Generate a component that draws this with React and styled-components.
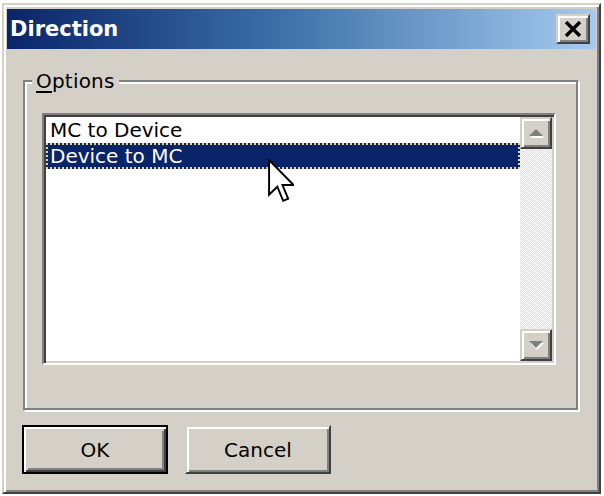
import React from 'react'
import styled, { createGlobalStyle } from 'styled-components'

const GlobalStyle = createGlobalStyle`
  html, body {
    margin: 0;
    padding: 0;
    background: #ffffff;
  }
  * {
    box-sizing: border-box;
  }
`

const raised = `
  border: 2px solid;
  border-color: #d4d0c8 #404040 #404040 #d4d0c8;
  box-shadow: inset 2px 2px #ffffff, inset -2px -2px #808080;
`

const Dialog = styled.div`
  width: 599px;
  height: 491px;
  margin: 3px 0 0 2px;
  padding: 3px;
  background: #d4d0c8;
  font-family: "DejaVu Sans", Tahoma, sans-serif;
  color: #000;
  display: flex;
  flex-direction: column;
  ${raised}
`

const TitleBar = styled.div`
  height: 40px;
  margin-top: 1px;
  display: flex;
  align-items: center;
  justify-content: space-between;
  padding: 0 6px 0 3px;
  background: linear-gradient(to right, #0a246a 0%, #3a6ea5 45%, #a6caf0 100%);
`

const Title = styled.span`
  color: #ffffff;
  font-weight: bold;
  font-size: 21px;
`

const CloseButton = styled.button`
  width: 34px;
  height: 30px;
  padding: 0;
  background: #d4d0c8;
  display: flex;
  align-items: center;
  justify-content: center;
  ${raised}
`

const Body = styled.div`
  padding: 20px 0 0 16px;
  display: flex;
  flex-direction: column;
`

const Group = styled.fieldset`
  width: 555px;
  margin: 0;
  padding: 20px 17px 43px 17px;
  border: 2px solid #808080;
  box-shadow: inset 2px 2px #ffffff, 2px 2px #ffffff;
`

const Legend = styled.legend`
  margin-left: -10px;
  padding: 0 4px;
  font-size: 20px;
  line-height: 24px;
  background: #d4d0c8;
  letter-spacing: 0.2px;
`

const Mnemonic = styled.span`
  text-decoration: underline;
  text-underline-offset: 3px;
`

const ListBox = styled.div`
  width: 514px;
  height: 252px;
  display: flex;
  background: #ffffff;
  border: 2px solid;
  border-color: #808080 #ffffff #ffffff #808080;
  box-shadow: inset 2px 2px #404040, inset -2px -2px #d4d0c8;
  padding: 2px;
`

const Items = styled.div`
  flex: 1;
  position: relative;
  display: flex;
  flex-direction: column;
`

const Item = styled.div`
  height: 26px;
  line-height: 22px;
  padding: 0 2px;
  font-size: 20px;
  border: 2px dotted ${p => (p.$selected ? '#e6d690' : 'transparent')};
  background: ${p => (p.$selected ? '#0a246a' : 'transparent')};
  color: ${p => (p.$selected ? '#ffffff' : '#000000')};
`

const Cursor = styled.svg`
  position: absolute;
  left: 222px;
  top: 42px;
`

const ScrollBar = styled.div`
  width: 32px;
  display: flex;
  flex-direction: column;
  justify-content: space-between;
  background: repeating-conic-gradient(#ffffff 0 25%, #e2dfd9 0 50%) 0 0 / 2px 2px;
`

const ScrollButton = styled.div`
  width: 32px;
  height: 32px;
  background: #d4d0c8;
  display: flex;
  align-items: center;
  justify-content: center;
  ${raised}
`

const Buttons = styled.div`
  display: flex;
  gap: 17px;
  margin-top: 15px;
  margin-left: -1px;
`

const Button = styled.button`
  width: 146px;
  height: 49px;
  padding: 0;
  font-family: "DejaVu Sans", Tahoma, sans-serif;
  font-size: 20px;
  color: #000;
  background: #d4d0c8;
  ${raised}
  ${p => p.$default && `
    border: 2px solid #000000;
    box-shadow: inset 2px 2px #ffffff, inset -2px -2px #404040, inset 4px 4px #d4d0c8, inset -4px -4px #808080;
  `}
`

const Arrow = ({ up }) => (
  <svg width="18" height="12" viewBox="0 0 18 12">
    {up ? (
      <>
        <polygon points="9,3 16,10 2,10" fill="#ffffff" transform="translate(1,1)" />
        <polygon points="9,2 16,9 2,9" fill="#808080" />
      </>
    ) : (
      <>
        <polygon points="2,3 16,3 9,10" fill="#ffffff" transform="translate(1,1)" />
        <polygon points="2,2 16,2 9,9" fill="#808080" />
      </>
    )}
  </svg>
)

export default function App() {
  return (
    <>
      <GlobalStyle />
      <Dialog>
        <TitleBar>
          <Title>Direction</Title>
          <CloseButton aria-label="Close">
            <svg width="18" height="16" viewBox="0 0 18 16">
              <path d="M2 1 L16 15 M16 1 L2 15" stroke="#000" strokeWidth="3.4" />
            </svg>
          </CloseButton>
        </TitleBar>
        <Body>
          <Group>
            <Legend>
              <Mnemonic>O</Mnemonic>ptions
            </Legend>
            <ListBox>
              <Items>
                <Item>MC to Device</Item>
                <Item $selected>Device to MC</Item>
                <Cursor width="26" height="44" viewBox="0 0 12 20.3">
                  <path
                    d="M0.5 0.5 V16.5 L4.3 12.8 L7 19.3 L9.3 18.3 L6.7 12 L11.8 12 Z"
                    fill="#ffffff"
                    stroke="#000000"
                    strokeWidth="0.9"
                    strokeLinejoin="miter"
                  />
                </Cursor>
              </Items>
              <ScrollBar>
                <ScrollButton>
                  <Arrow up />
                </ScrollButton>
                <ScrollButton>
                  <Arrow />
                </ScrollButton>
              </ScrollBar>
            </ListBox>
          </Group>
          <Buttons>
            <Button $default>OK</Button>
            <Button>Cancel</Button>
          </Buttons>
        </Body>
      </Dialog>
    </>
  )
}
